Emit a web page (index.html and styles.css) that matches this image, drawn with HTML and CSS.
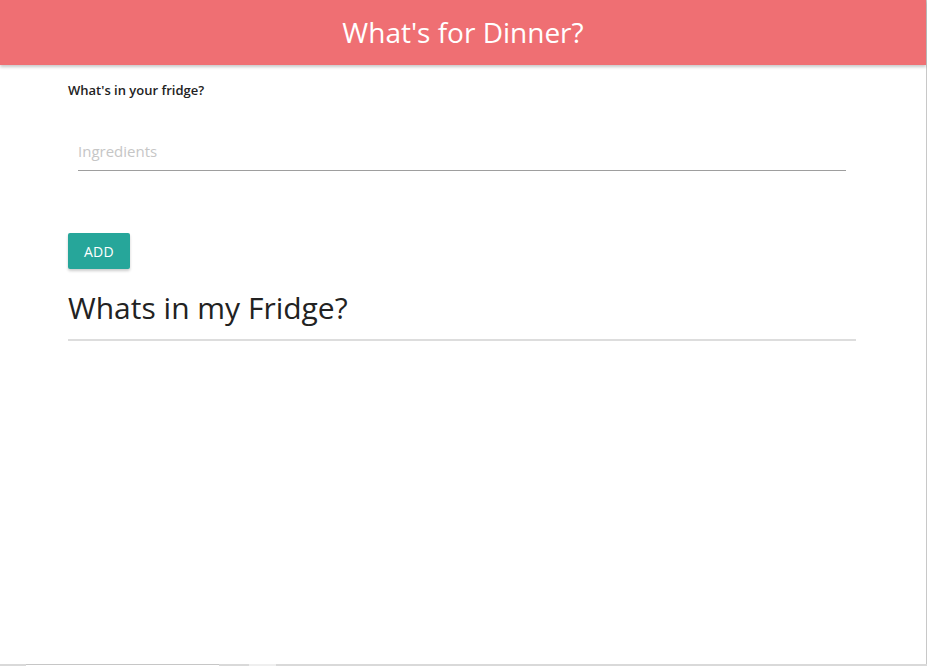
FILE: index.html
```html
<!DOCTYPE html>
<html>
<head>
<meta charset="utf-8">
<link rel="stylesheet" href="styles.css">
</head>
<body>
<div class="frame">
  <header class="topbar">
    <h1 class="title">What's for Dinner?</h1>
  </header>
  <main class="container">
    <form class="fridge-form">
      <label class="form-label">What's in your fridge?</label>
      <div class="input-field">
        <input class="ingredient-input" type="text" placeholder="Ingredients">
      </div>
      <button class="btn" type="button">ADD</button>
    </form>
    <h2 class="section-title">Whats in my Fridge?</h2>
    <hr class="divider">
  </main>
</div>
<div class="bottom-bar">
  <div class="bar-thumb"></div>
  <div class="bar-light"></div>
</div>
</body>
</html>
```

FILE: styles.css
```css
html, body {
  margin: 0;
  padding: 0;
  height: 100%;
  background: #fff;
}
body {
  font-family: "Open Sans", "Noto Sans", sans-serif;
  color: #222;
  display: flex;
  flex-direction: column;
  overflow: hidden;
}
.frame {
  flex: 1;
  border-right: 1px solid #c8c8c8;
  display: flex;
  flex-direction: column;
}
.topbar {
  height: 65px;
  background: #ef6f73;
  display: flex;
  align-items: center;
  justify-content: center;
  box-shadow: 0 2px 3px rgba(0,0,0,0.22);
  position: relative;
  z-index: 1;
}
.title {
  margin: 0;
  color: #fff;
  font-weight: 400;
  font-size: 28px;
  letter-spacing: 0;
  padding-bottom: 1px;
}
.container {
  width: 790px;
  margin: 0 auto;
}
.fridge-form {
  display: flex;
  flex-direction: column;
  align-items: flex-start;
}
.form-label {
  margin-top: 16px;
  font-size: 13px;
  font-weight: 600;
  color: #222;
  line-height: 18px;
}
.input-field {
  align-self: stretch;
  padding: 0 12px 0 10px;
  margin-top: 32px;
}
.ingredient-input {
  width: 100%;
  box-sizing: border-box;
  border: none;
  border-bottom: 1px solid #9e9e9e;
  outline: none;
  height: 40px;
  padding: 0;
  font-family: inherit;
  font-size: 15px;
  background: transparent;
}
.ingredient-input::placeholder {
  color: #c6c6c6;
}
.btn {
  margin-top: 62px;
  width: 62px;
  height: 36px;
  border: none;
  border-radius: 2px;
  background: #26a69a;
  color: #fff;
  font-family: inherit;
  font-size: 14px;
  letter-spacing: 0.3px;
  box-shadow: 0 2px 3px rgba(0,0,0,0.2);
  padding: 0;
}
.section-title {
  margin: 18px 0 0;
  font-weight: 400;
  font-size: 30px;
  line-height: 42px;
  color: #222;
}
.divider {
  margin: 10px 0 0;
  border: none;
  border-top: 2px solid #ddd;
  width: 788px;
}
.bottom-bar {
  height: 2px;
  background: #d9d9d9;
  display: flex;
}
.bar-thumb {
  margin-left: 26px;
  width: 193px;
  background: #fff;
  border-top: 1px solid #c6c6c6;
}
.bar-light {
  margin-left: 30px;
  width: 27px;
  background: #efefef;
}
```
